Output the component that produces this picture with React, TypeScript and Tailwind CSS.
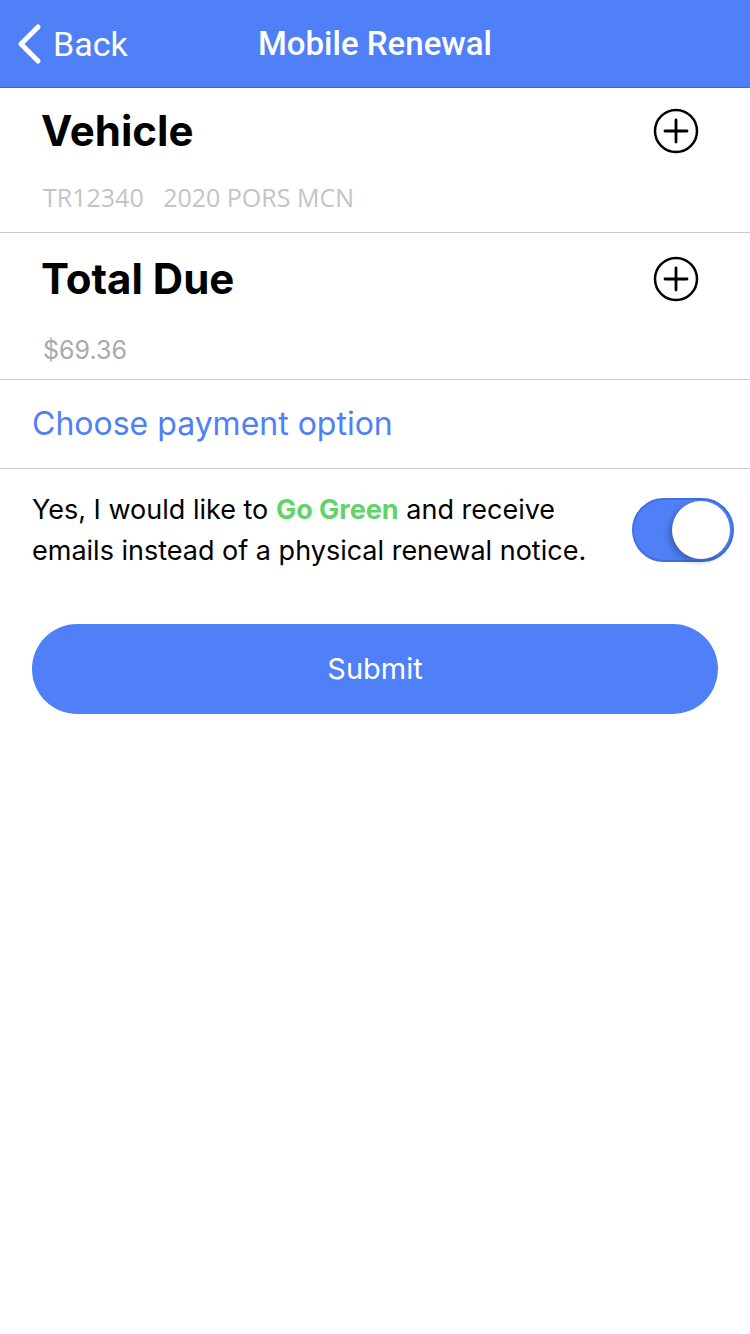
const blue = "#4f80f7";

function PlusCircle() {
  return (
    <svg width="46" height="46" viewBox="0 0 46 46" fill="none">
      <circle cx="23" cy="23" r="21" stroke="#000" strokeWidth="2.5" />
      <path d="M23 12v22M12 23h22" stroke="#000" strokeWidth="2.8" strokeLinecap="round" />
    </svg>
  );
}

function BackChevron() {
  return (
    <svg width="26" height="42" viewBox="0 0 26 42" fill="none">
      <polyline
        points="21,4 4,21 21,38"
        stroke="#fff"
        strokeWidth="5"
        strokeLinecap="round"
        strokeLinejoin="round"
      />
    </svg>
  );
}

type SectionProps = {
  title: string;
  sub: React.ReactNode;
  top: string;
  gap: string;
  bottom: string;
};

function ExpandSection({ title, sub, top, gap, bottom }: SectionProps) {
  return (
    <div className={`border-b border-[#cccccc] pr-[51px] ${top} ${bottom}`}>
      <div className="flex h-[48px] items-center justify-between pl-[41px]">
        <span className="text-[42px] font-bold leading-[48px] text-black">{title}</span>
        <PlusCircle />
      </div>
      <div className={`pl-[43px] ${gap}`}>{sub}</div>
    </div>
  );
}

export default function App() {
  return (
    <div className="min-h-[1334px] w-[750px] bg-white font-['Inter','Liberation_Sans',sans-serif]">
      <header className="grid h-[88px] grid-cols-[1fr_auto_1fr] items-center border-b border-[#3d6bd6] bg-[#4f80f7] font-['Roboto','Liberation_Sans',sans-serif] text-white">
        <div className="flex items-center gap-[10px] pl-[17px]">
          <BackChevron />
          <span className="text-[34px] leading-none">Back</span>
        </div>
        <h1 className="text-[33px] font-medium leading-none">Mobile Renewal</h1>
        <div />
      </header>

      <ExpandSection
        title="Vehicle"
        top="pt-[19px]"
        gap="mt-[27px]"
        bottom="pb-[20px]"
        sub={
          <div className="font-['Open_Sans',sans-serif] text-[25px] leading-[30px] text-[#c4c4c4]">
            TR12340&nbsp;&nbsp;&nbsp;2020 PORS MCN
          </div>
        }
      />
      <ExpandSection
        title="Total Due"
        top="pt-[22px]"
        gap="mt-[32px]"
        bottom="pb-[14px]"
        sub={<div className="text-[25px] leading-[30px] text-[#a9a9a9]">$69.36</div>}
      />

      <div className="flex h-[89px] items-center border-b border-[#cccccc] pl-[32px]">
        <span className="text-[32px] leading-none" style={{ color: blue }}>
          Choose payment option
        </span>
      </div>

      <div className="flex items-center justify-between pl-[32px] pr-[16px] pt-[20px]">
        <p className="text-[27px] leading-[41px] text-black">
          Yes, I would like to <span className="font-bold text-[#5fd36c]">Go Green</span> and receive
          <br />
          emails instead of a physical renewal notice.
        </p>
        <div className="flex h-[64px] w-[102px] items-center justify-end rounded-full border-2 border-[#3f6fe0] bg-[#4f80f7] pr-[2px]">
          <div className="h-[58px] w-[58px] rounded-full bg-white shadow-[-3px_3px_6px_rgba(0,0,0,0.25)]" />
        </div>
      </div>

      <div className="px-[32px] pt-[53px]">
        <button
          type="button"
          className="flex h-[90px] w-full items-center justify-center rounded-full bg-[#4f80f7] text-[29px] text-white"
        >
          Submit
        </button>
      </div>
    </div>
  );
}
